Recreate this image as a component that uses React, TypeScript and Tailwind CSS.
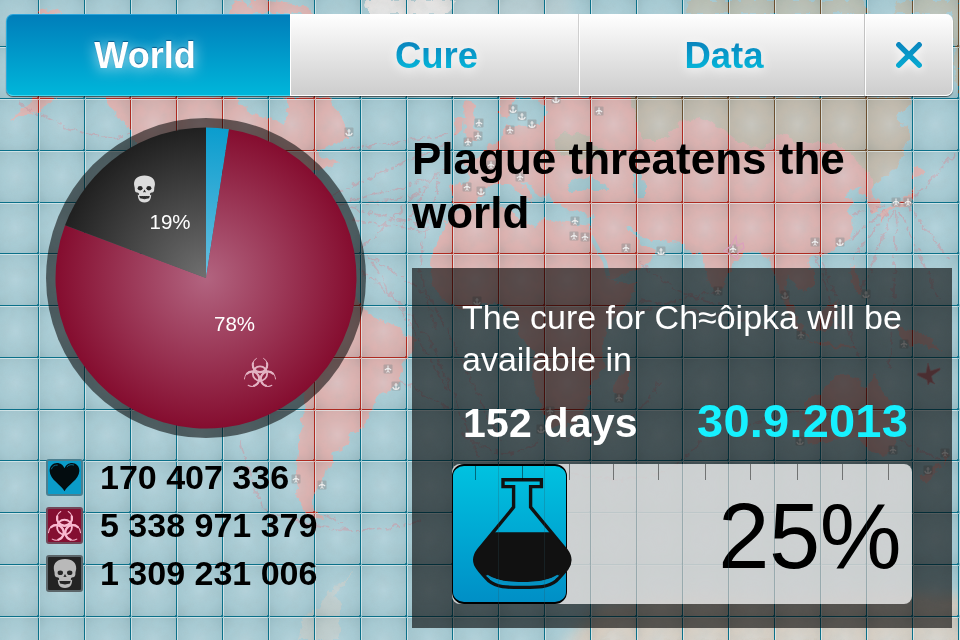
import React from "react";

interface Slice {
  id: string;
  from: number;
  to: number;
  fill: string;
}

interface Stat {
  id: string;
  value: string;
  box: string;
  icon: React.ReactNode;
}

// Angles in degrees, clockwise from twelve o'clock
const slices: Slice[] = [
  { id: "healthy", from: 0, to: 8.8, fill: "url(#healthy)" },
  { id: "infected", from: 8.8, to: 290.5, fill: "url(#infected)" },
  { id: "dead", from: 290.5, to: 360, fill: "url(#dead)" },
];

const ticks = [23, 70, 117, 161, 206, 253, 298, 345, 390, 436];

const gridX = Array.from({ length: 21 }, (_, i) => 38 + i * 46);
const gridY = [46, 98, 150, 202, 253, 305, 357, 409, 460, 512, 564, 616];

const infectedLand = [
  // North America and the Labrador coast
  "M34 97 L56 97 L44 108 L26 115 L8 121 L20 112 Z",
  "M36 14 L42 8 L58 10 L62 14 Z",
  "M230 14 L232 2 L242 0 L250 8 L252 0 L268 0 L285 3 L305 5 L315 14 Z",
  "M103 96 L108 104 L116 116 L124 122 L131 133 L140 160 L180 200 L260 200 L315 170 L326 168 L340 163 L322 158 L317 150 L334 146 L348 137 L346 121 L335 109 L330 96 L284 96 L288 108 L284 125 L272 118 L252 114 L240 102 L236 96 Z",
  // South America
  "M340 285 L362 305 L372 318 L394 325 L408 335 L416 340 L414 350 L402 366 L398 386 L382 393 L374 402 L368 420 L358 432 L346 434 L350 442 L342 450 L332 452 L334 462 L326 468 L322 484 L312 494 L312 508 L324 518 L308 516 L299 500 L296 470 L299 440 L306 405 L306 380 L290 350 L300 300 Z",
  // British Isles
  "M463 100 L476 106 L472 122 L480 134 L478 140 L464 142 L466 128 Z",
  "M456 118 L465 118 L463 132 L452 136 Z",
  // Scandinavia
  "M500 92 L520 92 L512 104 L510 118 L500 116 Z",
  // Europe and Asia
  "M520 96 L911 96 L909 104 L895 119 L899 124 L909 126 L910 136 L896 168 L886 176 L874 186 L872 196 L880 204 L878 212 L870 210 L866 196 L858 192 L864 186 L850 190 L844 200 L854 198 L848 208 L852 218 L853 232 L845 244 L828 253 L812 256 L806 262 L814 272 L814 286 L803 292 L794 282 L786 276 L784 290 L792 304 L800 322 L794 322 L784 304 L780 288 L772 268 L764 254 L746 252 L730 268 L724 284 L718 294 L708 282 L702 256 L690 252 L682 242 L660 240 L650 240 L640 238 L632 226 L628 228 L640 242 L656 250 L652 262 L612 280 L604 262 L590 236 L592 216 L575 212 L555 204 L550 194 L540 196 L530 186 L520 180 L530 194 L532 202 L522 196 L508 184 L494 184 L484 190 L476 202 L464 209 L452 204 L450 184 L470 182 L468 166 L458 162 L480 156 L488 146 L502 138 L508 124 L520 128 L540 124 L548 112 L538 100 Z",
  // Africa
  "M452 212 L500 207 L512 210 L518 220 L534 226 L546 218 L560 222 L590 226 L592 240 L606 268 L612 282 L636 284 L630 300 L608 326 L602 346 L606 366 L592 384 L588 404 L574 424 L548 428 L542 410 L532 376 L534 352 L520 336 L516 316 L504 304 L484 304 L462 310 L444 302 L430 284 L432 252 L446 226 Z",
  "M616 398 L614 384 L620 376 L630 366 L630 382 L622 400 Z",
  // Japan, the Philippines, Indonesia
  "M914 165 L926 172 L918 178 L912 180 Z",
  "M913 182 L914 200 L906 206 L890 210 L882 222 L878 214 L894 204 L908 196 Z",
  "M850 266 L855 264 L857 276 L864 290 L860 296 L852 284 Z",
  "M816 316 L828 306 L836 302 L834 322 L824 332 L816 328 Z",
  "M786 306 L800 322 L808 338 L796 330 Z",
  "M806 340 L832 344 L856 346 L856 348 L828 347 Z",
  "M892 324 L912 330 L930 338 L942 352 L922 344 L910 346 Z",
  // Australia and New Zealand
  "M804 414 L804 402 L820 392 L830 382 L842 374 L858 378 L860 386 L868 388 L874 372 L880 388 L892 404 L900 420 L894 446 L884 456 L872 454 L862 440 L846 434 L828 442 L808 446 Z",
  "M944 452 L950 454 L944 464 Z",
  "M936 464 L942 466 L926 482 L920 480 Z",
];

const freeLand = [
  "M686 14 L690 0 L860 0 L872 14 Z",
  "M892 14 L898 2 L914 0 L960 0 L960 96 L955 82 L952 14 Z",
  "M556 150 L552 140 L566 132 L586 136 L590 144 L606 150 L602 158 L576 160 Z",
  "M630 96 L911 96 L909 104 L895 119 L899 124 L909 126 L910 136 L896 168 L886 176 L874 186 L866 170 L854 160 L842 146 L820 142 L800 144 L782 134 L760 148 L742 144 L724 130 L700 118 L680 122 L664 140 L644 140 L636 122 Z",
];

const routes = [
  "M340 150 L455 134 M330 196 L450 142 M366 204 L420 194 M300 215 L440 176 M360 250 Q410 200 446 165",
  "M350 208 L424 226 M352 220 L430 232 M358 268 Q400 300 430 340 L480 460 M366 254 L430 296 L500 440",
  "M440 180 L424 240 L420 270 L436 330 M428 185 L402 230 M372 262 L448 390 M400 380 L450 410",
  "M618 320 Q670 300 716 292 M640 262 Q680 300 730 306 M640 300 L780 330 M660 380 Q640 430 560 440",
  "M853 215 L885 205 M850 240 L885 210 M852 258 L888 212 M862 290 L893 212 M896 212 L890 370 M900 212 L940 300 M908 206 L950 260 M912 200 L958 150 M822 262 L860 360 M816 256 L840 330",
  "M20 104 Q100 150 130 133 M240 440 Q250 480 266 512 L322 526 M290 520 Q360 540 420 520 M324 515 L344 522",
  "M700 440 Q660 500 560 470 M740 430 Q800 400 830 420 M900 440 L940 460 M460 430 Q500 470 540 440",
];

// [x, y, isPlane]
const ports: [number, number, boolean][] = [
  [349, 132, false], [388, 369, true], [396, 386, false], [479, 123, true], [478, 136, true],
  [468, 142, true], [491, 165, true], [467, 187, true], [481, 191, false], [513, 109, false],
  [522, 116, false], [532, 124, false], [510, 130, true], [556, 99, false], [599, 111, true],
  [520, 177, true], [575, 221, true], [574, 236, true], [585, 237, true], [626, 248, true],
  [661, 251, false], [733, 249, true], [815, 242, true], [840, 242, false], [896, 202, true],
  [908, 202, true], [477, 301, false], [718, 291, true], [785, 295, false], [866, 294, false],
  [801, 335, true], [904, 344, true], [619, 398, true], [550, 411, true], [541, 429, false],
  [800, 441, false], [893, 450, true], [945, 453, true], [296, 479, true], [322, 485, true],
  [928, 470, false],
];

const polar = (angle: number, r: number) => {
  const a = (angle * Math.PI) / 180;
  return `${(160 + r * Math.sin(a)).toFixed(2)} ${(160 - r * Math.cos(a)).toFixed(2)}`;
};

const slicePath = (s: Slice) =>
  `M160 160 L${polar(s.from, 150.5)} A150.5 150.5 0 ${s.to - s.from > 180 ? 1 : 0} 1 ${polar(s.to, 150.5)} Z`;

const Biohazard = ({ className }: { className?: string }) => (
  <svg viewBox="0 0 32 30" className={className} fill="none" stroke="currentColor" strokeLinecap="round">
    <circle cx="16" cy="16.6" r="7.2" strokeWidth="1.8" />
    {[0, 120, 240].map((turn) => (
      <g key={turn} transform={`rotate(${turn} 16 17.2)`}>
        <path d="M12.4 1.4 A7.6 7.6 0 1 0 19.6 1.4" strokeWidth="1" />
        <path d="M9 6.2 A7.2 7.2 0 1 0 23 6.2" strokeWidth="2.1" />
      </g>
    ))}
  </svg>
);

const Skull = ({ className }: { className?: string }) => (
  <svg viewBox="0 0 24 30" className={className}>
    <path
      fill="currentColor"
      d="M12 0.5 C4.5 0.5 0.6 4.5 0.8 10 C0.9 12 1.6 13.3 1.6 15 C1.5 17 2.2 18.6 4 18.8 C5.8 19 6.2 19.6 6.1 21.2 L6 22.5 L18 22.5 L17.9 21.2 C17.8 19.6 18.2 19 20 18.8 C21.8 18.6 22.5 17 22.4 15 C22.4 13.3 23.1 12 23.2 10 C23.4 4.5 19.5 0.5 12 0.5 Z"
    />
    <path
      fill="currentColor"
      d="M4.8 21 C5 25.5 6 29.5 12 29.5 C18 29.5 19 25.5 19.2 21 L17.6 22 L17 25 L12 26 L7 25 L6.4 22 Z"
    />
    <ellipse cx="7.3" cy="14.2" rx="2.7" ry="2.3" fill="#252525" />
    <ellipse cx="16.7" cy="14.2" rx="2.7" ry="2.3" fill="#252525" />
    <path d="M12 15.5 L10.4 18.4 L11.6 18.6 L12 18 L12.4 18.6 L13.6 18.4 Z" fill="#252525" />
    <path d="M7 22.6 L8.4 24.6 L9.8 22.8 L11 24.8 L12 23 L13 24.8 L14.2 22.8 L15.6 24.6 L17 22.6" fill="none" stroke="#252525" strokeWidth="0.9" />
  </svg>
);

const Heart = () => (
  <svg viewBox="0 0 36 36" className="h-[34px] w-[34px]">
    <path
      fill="#030c0f"
      d="M18 33.5 C15 27 2 21 1.8 11.5 C1.6 6 5.4 2.6 9.8 2.6 C13.6 2.6 16.8 5 18 8.4 C19.2 5 22.4 2.6 26.2 2.6 C30.6 2.6 34.4 6 34.2 11.5 C34 21 21 27 18 33.5 Z"
    />
    <path d="M3.6 9.6 C4.6 6.2 7.4 4.8 10.6 5 M20.6 7 C22.4 4.6 25.4 4 28.4 5" stroke="#0b7da1" strokeWidth="0.9" fill="none" />
  </svg>
);

const Flask = () => (
  <svg viewBox="0 0 104 116" className="h-[116px] w-[104px] shrink-0">
    <path
      d="M32 3.7 L70.4 3.7 L70.4 10.6 L59.6 10.6 L59.6 31.2 L95 74 C99.5 80 100.5 86 96 92.5 C92 98 89 101 85 105 C77 111.6 66 111.4 51.3 111.4 C36 111.4 26 111.6 18 105 C14 101 11 98 7 92.5 C2 86 3 80 7.5 74 L42.6 31.2 L42.6 10.6 L32 10.6 Z"
      fill="none"
      stroke="#111"
      strokeWidth="3.4"
    />
    <path
      d="M22.5 56.3 L80 56.3 L96 75 C100.5 81 101.5 86 97 92 C94 96 91 98 87 99.5 C78 104 66 106 51.3 106 C36 106 25 104 16 99.5 C11 98 8 96 5.5 92 C1.5 86 2.5 81 7 75 Z"
      fill="#111"
    />
    <path d="M16 99.6 C25 105.6 36 107.6 51.3 107.6 C66 107.6 78 105.6 87 99.6" fill="none" stroke="#0791c0" strokeWidth="2" />
  </svg>
);

const stats: Stat[] = [
  { id: "healthy", value: "170 407 336", box: "bg-[#0b9cc9] border-[#4a7f90]", icon: <Heart /> },
  {
    id: "infected",
    value: "5 338 971 379",
    box: "bg-[#840f31] border-[#704858]",
    icon: <Biohazard className="h-[31px] w-[33px] shrink-0 text-[#f9b9d0]" />,
  },
  {
    id: "dead",
    value: "1 309 231 006",
    box: "bg-[#232323] border-[#5b6569]",
    icon: <Skull className="h-[31px] w-[24px] text-[#b9b9b9]" />,
  },
];

const GridLines = ({ color }: { color: string }) => (
  <g fill={color}>
    {gridX.map((x) => (
      <rect key={x} x={x} y="0" width="1" height="640" />
    ))}
    {gridY.map((y) => (
      <rect key={y} x="0" y={y} width="960" height="1" />
    ))}
    {gridX.map((x) => gridY.map((y) => <rect key={`${x}-${y}`} x={x - 1} y={y - 1} width="3" height="3" opacity="0.7" />))}
  </g>
);

const WorldMap = () => (
  <svg viewBox="0 0 960 640" className="absolute inset-0 h-[640px] w-[960px]">
    <defs>
      <filter id="coast" x="0" y="0" width="960" height="640" filterUnits="userSpaceOnUse">
        <feTurbulence type="fractalNoise" baseFrequency="0.12" numOctaves="3" seed="4" />
        <feDisplacementMap in="SourceGraphic" scale="9" xChannelSelector="R" yChannelSelector="G" />
      </filter>
      <filter id="soft" x="-30%" y="-30%" width="160%" height="160%">
        <feGaussianBlur stdDeviation="7" />
      </filter>
      <filter id="grain" x="0" y="0" width="100%" height="100%">
        <feTurbulence type="fractalNoise" baseFrequency="0.09" numOctaves="4" seed="9" />
        <feColorMatrix values="0 0 0 0 0.35  0 0 0 0 0.42  0 0 0 0 0.42  0.9 0 0 0 -0.34" />
      </filter>
      <radialGradient id="cell" cx="50%" cy="50%" r="70%">
        <stop offset="0" stopColor="#d8eaf2" stopOpacity="0.3" />
        <stop offset="0.55" stopColor="#bcd6dc" stopOpacity="0.1" />
        <stop offset="1" stopColor="#40666c" stopOpacity="0.18" />
      </radialGradient>
      <pattern id="cells" x="38.5" y="46.6" width="46" height="51.75" patternUnits="userSpaceOnUse">
        <rect width="46" height="51.75" fill="url(#cell)" />
      </pattern>
      <mask id="infectedMask" maskUnits="userSpaceOnUse" x="0" y="0" width="960" height="640">
        <g filter="url(#coast)" fill="#fff">
          {infectedLand.map((d, i) => (
            <path key={i} d={d} />
          ))}
        </g>
      </mask>
      <mask id="freeMask" maskUnits="userSpaceOnUse" x="0" y="0" width="960" height="640">
        <g filter="url(#coast)" fill="#fff">
          {freeLand.map((d, i) => (
            <path key={i} d={d} />
          ))}
        </g>
      </mask>
      <mask id="waterMask" maskUnits="userSpaceOnUse" x="0" y="0" width="960" height="640">
        <rect width="960" height="640" fill="#fff" />
        <g filter="url(#coast)" fill="#000">
          {infectedLand.map((d, i) => (
            <path key={i} d={d} />
          ))}
        </g>
      </mask>
    </defs>

    <rect width="960" height="640" fill="#a5c9d2" />
    <g filter="url(#soft)">
      <rect x="380" y="-10" width="190" height="90" fill="#b5cbd0" />
      <path d="M600 604 L700 594 L780 600 L880 592 L970 596 L970 650 L560 650 Z" fill="#d9cbbd" />
    </g>
    <g filter="url(#coast)">
      <path d="M364 0 L368 14 L390 14 L400 14 L448 14 L456 0 Z" fill="#e9e4e2" />
      <path d="M356 569 L338 586 L326 596 L318 608 L304 616 L298 640 L340 640 L338 620 L342 604 L334 596 Z" fill="#c9cac4" opacity="0.7" />
      <path d="M640 606 L690 600 L740 612 L800 602 L850 606 L900 596 L960 606 L960 640 L600 640 Z" fill="#d8cfc4" opacity="0.7" />
    </g>

    <rect width="960" height="640" fill="#dfaeab" mask="url(#infectedMask)" />
    <rect width="960" height="640" fill="#bcb9a8" opacity="0.82" mask="url(#freeMask)" />
    <path d="M568 184 L578 176 L590 178 L606 184 L608 190 L586 190 L570 192 Z M632 176 L640 172 L646 184 L646 198 L636 196 L634 186 Z" fill="#9dc2ca" filter="url(#coast)" />
    <path d="M591 236 L605 262 L608 276" stroke="#a3c7d0" strokeWidth="4" fill="none" />
    <g filter="url(#coast)" fill="none" stroke="#cf8f9c" strokeWidth="1.8" strokeDasharray="14 3 5 2" opacity="0.55">
      {routes.map((d, i) => (
        <path key={i} d={d} />
      ))}
    </g>
    <rect width="960" height="640" filter="url(#grain)" opacity="0.3" />
    <rect width="960" height="640" fill="url(#cells)" />

    <g mask="url(#waterMask)">
      <GridLines color="#0b7089" />
    </g>
    <g mask="url(#infectedMask)">
      <GridLines color="#ad2a20" />
    </g>
    <g mask="url(#freeMask)">
      <GridLines color="#6b4f30" />
    </g>
    <g fill="#e9f4f5" opacity="0.62">
      {gridX.map((x) => (
        <rect key={x} x={x + 1} y="0" width="1" height="640" />
      ))}
      {gridY.map((y) => (
        <rect key={y} x="0" y={y + 1} width="960" height="1" />
      ))}
    </g>

    {ports.map(([x, y, plane]) => (
      <g key={`${x}-${y}`} transform={`translate(${x} ${y})`}>
        <rect x="-4.5" y="-4.5" width="9" height="9" rx="1" fill="#8d8f92" opacity="0.5" />
        {plane ? (
          <path d="M0 -3.5 L0 3 M-3.2 1 L0 -1 L3.2 1 M-1.6 3.4 L0 2.4 L1.6 3.4" stroke="#eee" strokeWidth="1.1" fill="none" />
        ) : (
          <path d="M0 -3 L0 3.4 M-1.6 -1 L1.6 -1 M-3.2 0.8 Q-2.8 3.4 0 3.4 Q2.8 3.4 3.2 0.8" stroke="#eee" strokeWidth="1.1" fill="none" />
        )}
      </g>
    ))}
    <path d="M736 236 L737 246 L743 243 L744 248 L738 253 L737 259 L732 255 L724 251 L731 246 Z" fill="none" stroke="#dba0bd" strokeWidth="1.2" />
    <path
      d="M928 363 L930.5 371 L940 368 L940 370 L931.5 376 L932.5 381 L935 384 L930 382 L928 385 L927 380 L917 375 L918 373 L926 373 Z"
      fill="#b8737c"
      stroke="#c79aa1"
      strokeWidth="0.8"
    />
  </svg>
);

const PieChart = () => (
  <div className="relative h-[320px] w-[320px]">
    <svg viewBox="0 0 320 320" className="h-[320px] w-[320px]">
      <defs>
        <radialGradient id="healthy" gradientUnits="userSpaceOnUse" cx="160" cy="160" r="150">
          <stop offset="0" stopColor="#68bfe0" />
          <stop offset="1" stopColor="#0b9dce" />
        </radialGradient>
        <radialGradient id="infected" gradientUnits="userSpaceOnUse" cx="160" cy="160" r="150">
          <stop offset="0" stopColor="#b26480" />
          <stop offset="1" stopColor="#850d2f" />
        </radialGradient>
        <radialGradient id="dead" gradientUnits="userSpaceOnUse" cx="160" cy="160" r="150">
          <stop offset="0" stopColor="#707070" />
          <stop offset="1" stopColor="#202020" />
        </radialGradient>
      </defs>
      <circle cx="160" cy="160" r="160" fill="#000" opacity="0.55" />
      {slices.map((s) => (
        <path key={s.id} d={slicePath(s)} fill={s.fill} />
      ))}
    </svg>
    <Skull className="absolute left-[87px] top-[57px] h-[28px] w-[23px] text-[#dcdcdc]" />
    <span className="absolute left-[103.5px] top-[92px] text-[20.5px] leading-6 text-white">19%</span>
    <span className="absolute left-[168px] top-[194px] text-[20.5px] leading-6 text-white">78%</span>
    <Biohazard className="absolute left-[198px] top-[239px] h-[30px] w-[32px] text-[#e3b3c3]" />
  </div>
);

const TabLabel = ({ children }: { children: React.ReactNode }) => (
  <span className="bg-linear-to-b from-[#0b84bd] from-20% to-[#06b4d8] to-80% bg-clip-text pt-[2px] text-[36.5px] leading-[42px] font-bold text-transparent drop-shadow-[0_2px_6px_#ffffff]">
    {children}
  </span>
);

const TabBar = () => (
  <nav className="ml-[6px] flex h-[82px] w-[947px] rounded-[7px] shadow-[0_1px_1px_rgba(0,0,0,0.6)]">
    <button className="flex w-[284px] items-center justify-center rounded-l-[7px] border-y border-l border-t-[#2ba3da] border-b-[#3fd7f2] border-l-[#29aadb] bg-linear-to-b from-[#007eba] to-[#00b6da] pt-[2px] pr-[7px] text-[36px] font-bold text-white [text-shadow:0_-1px_1px_rgba(0,60,110,0.7),0_2px_14px_rgba(255,255,255,0.75)]">
      World
    </button>
    <button className="flex w-[288px] items-center justify-center border-b-[1.5px] border-l border-white bg-linear-to-b from-white to-[#cdcdcd] pl-[4px]">
      <TabLabel>Cure</TabLabel>
    </button>
    <button className="flex w-[286px] items-center justify-center border-b-[1.5px] border-l border-b-white border-l-[#cfcfcf] bg-linear-to-b from-white to-[#cdcdcd] pl-[5px] shadow-[inset_1px_0_0_#ffffff]">
      <TabLabel>Data</TabLabel>
    </button>
    <button className="flex flex-1 items-center justify-center rounded-r-[7px] border-r border-b-[1.5px] border-l border-r-white border-b-white border-l-[#c2c2c2] bg-linear-to-b from-white to-[#cdcdcd] pt-px shadow-[inset_1px_0_0_#ffffff]">
      <svg viewBox="0 0 26 26" className="h-[26px] w-[26px] drop-shadow-[0_2px_5px_#ffffff]">
        <defs>
          <linearGradient id="close" gradientUnits="userSpaceOnUse" x1="0" y1="0" x2="0" y2="26">
            <stop offset="0" stopColor="#0b84bd" />
            <stop offset="1" stopColor="#06acd3" />
          </linearGradient>
        </defs>
        <path d="M2.8 2.8 L23.2 23.2 M23.2 2.8 L2.8 23.2" stroke="url(#close)" strokeWidth="5.4" strokeLinecap="round" />
      </svg>
    </button>
  </nav>
);

const CurePanel = () => (
  <section className="mt-[28px] h-[360px] w-[540px] bg-black/60 pt-[28px] pr-[40px] pl-[40px]">
    <p className="ml-[10px] text-[34px] leading-[42px] tracking-[-0.01px] whitespace-nowrap text-white">
      The cure for Ch≈ôipka will be
      <br />
      available in
    </p>
    <div className="mt-[13px] ml-[11px] flex h-[56px] items-baseline justify-between pr-[4px] font-bold whitespace-nowrap">
      <span className="text-[41px] leading-[56px] tracking-[0.2px] text-white">152 days</span>
      <span className="text-[47px] leading-[56px] tracking-[0.2px] text-[#16f1ff]">30.9.2013</span>
    </div>
    <div className="relative mt-[15px] flex h-[140px] w-[460px] items-start justify-between overflow-hidden rounded-[8px] bg-[#fbfbfb]/75">
      <div className="flex h-[140px] w-[115px] rounded-[12px] border-x-[1.5px] border-y-[2.5px] border-black bg-linear-to-b from-[#00c2e0] to-[#008fc6] pt-[10px] pl-[18px]">
        <Flask />
      </div>
      <span className="pt-[26px] pr-[11px] text-[92px] leading-none tracking-[-0.5px] text-black">25%</span>
      {ticks.map((x) => (
        <i key={x} className="absolute top-0 h-[16px] w-px bg-black/45" style={{ left: x }} />
      ))}
      {[46, 92, 138, 184, 230, 276, 322, 368, 414].map((x) => (
        <i key={x} className="absolute top-0 h-full w-px bg-[#2a5560]/25" style={{ left: x - 0.5 }} />
      ))}
    </div>
  </section>
);

const App = () => {
  return (
    <main className="relative h-[640px] w-[960px] overflow-hidden font-['Liberation_Sans',Arial,sans-serif]">
      <WorldMap />
      <div className="relative flex flex-col pt-[14px]">
        <TabBar />
        <div className="flex">
          <div className="w-[412px] pt-[22px] pl-[46px]">
            <PieChart />
            <ul className="mt-[20px] flex flex-col gap-[10px]">
              {stats.map((s) => (
                <li key={s.id} className="flex h-[38px] items-center gap-[17px]">
                  <span className={`flex h-[37px] w-[37px] shrink-0 items-center justify-center rounded-[3px] border-2 ${s.box}`}>
                    {s.icon}
                  </span>
                  <span className="text-[34px] leading-[38px] font-bold whitespace-nowrap text-black">{s.value}</span>
                </li>
              ))}
            </ul>
          </div>
          <div className="pt-[36px]">
            <h1 className="w-[500px] text-[44px] leading-[54px] font-bold text-black">Plague threatens the world</h1>
            <CurePanel />
          </div>
        </div>
      </div>
    </main>
  );
};

export default App;
